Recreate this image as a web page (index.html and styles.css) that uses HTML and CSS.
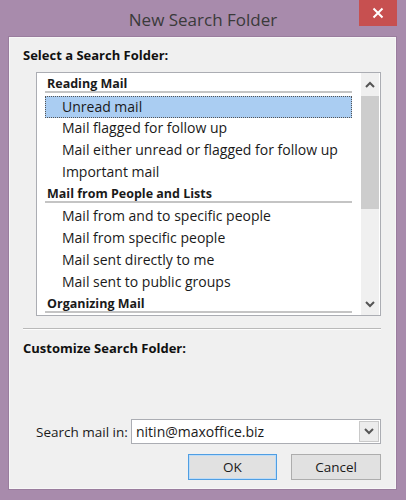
FILE: index.html
```html
<!DOCTYPE html>
<html>
<head>
<meta charset="utf-8">
<link rel="stylesheet" href="styles.css">
</head>
<body>
<div class="window">
  <div class="titlebar">
    <div class="title">New Search Folder</div>
    <div class="close">
      <svg width="12" height="12" viewBox="0 0 12 12"><path d="M1.5 1.5 L10.5 10.5 M10.5 1.5 L1.5 10.5" stroke="#fff" stroke-width="2" fill="none"/></svg>
    </div>
  </div>
  <div class="client">
    <div class="heading h1">Select a Search Folder:</div>
    <div class="listbox">
      <div class="rows">
        <div class="row group"><span>Reading Mail</span></div>
        <div class="row item selected"><span>Unread mail</span></div>
        <div class="row item"><span>Mail flagged for follow up</span></div>
        <div class="row item"><span>Mail either unread or flagged for follow up</span></div>
        <div class="row item"><span>Important mail</span></div>
        <div class="row group"><span>Mail from People and Lists</span></div>
        <div class="row item"><span>Mail from and to specific people</span></div>
        <div class="row item"><span>Mail from specific people</span></div>
        <div class="row item"><span>Mail sent directly to me</span></div>
        <div class="row item"><span>Mail sent to public groups</span></div>
        <div class="row group"><span>Organizing Mail</span></div>
      </div>
      <div class="scrollbar">
        <div class="arrow">
          <svg width="10" height="7" viewBox="0 0 10 7"><path d="M1 6 L5 2 L9 6" stroke="#555" stroke-width="2" fill="none"/></svg>
        </div>
        <div class="thumb"></div>
        <div class="track"></div>
        <div class="arrow">
          <svg width="10" height="7" viewBox="0 0 10 7"><path d="M1 1 L5 5 L9 1" stroke="#555" stroke-width="2" fill="none"/></svg>
        </div>
      </div>
    </div>
    <div class="separator"></div>
    <div class="heading h2">Customize Search Folder:</div>
    <div class="searchrow">
      <span class="label">Search mail in:</span>
      <div class="combo">
        <span class="combo-text">nitin@maxoffice.biz</span>
        <div class="combo-btn">
          <svg width="10" height="7" viewBox="0 0 10 7"><path d="M1 1 L5 5 L9 1" stroke="#555" stroke-width="2" fill="none"/></svg>
        </div>
      </div>
    </div>
    <div class="buttons">
      <div class="btn ok">OK</div>
      <div class="btn cancel">Cancel</div>
    </div>
  </div>
</div>
</body>
</html>
```
FILE: styles.css
```css
html, body {
  margin: 0;
  padding: 0;
}
body {
  width: 406px;
  height: 500px;
  overflow: hidden;
  font-family: "Open Sans", "Noto Sans", sans-serif;
  font-size: 13.5px;
  color: #1a1a1a;
}
.window {
  width: 406px;
  height: 500px;
  box-sizing: border-box;
  background: #a88bac;
  display: flex;
  flex-direction: column;
}
.titlebar {
  height: 37px;
  display: grid;
  grid-template-columns: 1fr auto 1fr;
  align-items: start;
}
.title {
  grid-column: 2;
  font-size: 17px;
  color: #3a3a3a;
  line-height: 22px;
  padding-top: 9px;
}
.close {
  grid-column: 3;
  justify-self: end;
  margin-right: 9px;
  width: 38px;
  height: 26px;
  background: #c75050;
  display: flex;
  align-items: center;
  justify-content: center;
}
.client {
  flex: 1;
  margin: 0 10px 11px 9px;
  background: #f0f0f0;
  border: 1px solid #f7f7f7;
  box-shadow: 0 0 0 1px #9a7d9e;
  display: flex;
  flex-direction: column;
  padding: 0 14px 0 13px;
}
.heading {
  font-weight: bold;
  font-size: 13px;
  line-height: 16px;
  color: #111;
}
.h1 {
  margin-top: 9px;
}
.listbox {
  margin-top: 9px;
  margin-left: 13px;
  height: 244px;
  box-sizing: border-box;
  border: 1px solid #abadb3;
  background: #fff;
  display: flex;
}
.rows {
  width: 307px;
  margin-left: 8px;
  padding-top: 1px;
  overflow: hidden;
}
.row {
  height: 22px;
  box-sizing: border-box;
  line-height: 20px;
  position: relative;
  font-size: 14px;
  white-space: nowrap;
}
.group {
  font-weight: bold;
  font-size: 12.5px;
  padding-left: 2px;
  border-bottom: 3px solid #fff;
}
.group::after {
  content: "";
  display: block;
  position: absolute;
  left: 0;
  right: 0;
  bottom: 0;
  height: 2px;
  background: #c4c4c4;
}
.item {
  padding-left: 17px;
}
.selected {
  background: #aacdf2;
  border: 1px dotted #555;
  padding-left: 16px;
  line-height: 20px;
}
.scrollbar {
  margin-left: 9px;
  width: 18px;
  background: #f0f0f0;
  display: flex;
  flex-direction: column;
}
.arrow {
  height: 22px;
  display: flex;
  align-items: center;
  justify-content: center;
}
.thumb {
  height: 113px;
  background: #cdcdcd;
  margin-top: 1px;
}
.track {
  flex: 1;
}
.separator {
  margin-top: 12px;
  height: 1px;
  background: #b9b9b9;
  border-bottom: 1px solid #fdfdfd;
}
.h2 {
  margin-top: 10px;
}
.searchrow {
  margin-top: 63px;
  display: flex;
  align-items: center;
  height: 25px;
}
.label {
  margin-left: 13px;
  width: 95px;
  color: #1a1a1a;
}
.combo {
  flex: 1;
  height: 25px;
  box-sizing: border-box;
  border: 1px solid #abadb3;
  background: #fff;
  display: flex;
  align-items: center;
}
.combo-text {
  flex: 1;
  padding-left: 4px;
  font-size: 14px;
}
.combo-btn {
  width: 20px;
  height: 21px;
  margin-right: 1px;
  box-sizing: border-box;
  border: 1px solid #c9c9c9;
  background: #ececec;
  display: flex;
  align-items: center;
  justify-content: center;
}
.buttons {
  margin-top: 10px;
  display: flex;
  justify-content: flex-end;
  gap: 14px;
}
.btn {
  height: 26px;
  box-sizing: border-box;
  display: flex;
  align-items: center;
  justify-content: center;
  background: #e1e1e1;
  border: 1px solid #adadad;
}
.ok {
  width: 89px;
  border: 1px solid #4f9ee3;
  box-shadow: inset 0 0 0 1px #bedcf6;
}
.cancel {
  width: 90px;
}
```
